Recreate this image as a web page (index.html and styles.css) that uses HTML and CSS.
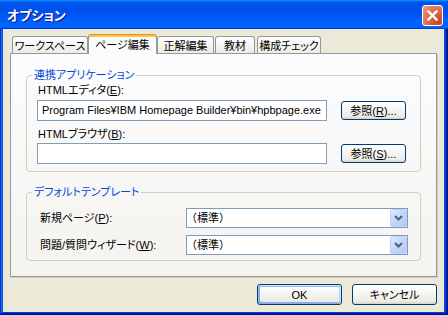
FILE: index.html
```html
<!DOCTYPE html>
<html lang="ja">
<head>
<meta charset="utf-8">
<title>オプション</title>
<link rel="stylesheet" href="styles.css">
</head>
<body>
<div class="window">
  <div class="titlebar">
    <span class="title">オプション</span>
    <button class="close" aria-label="閉じる">
      <svg width="11" height="11" viewBox="0 0 11 11"><path d="M1.5 1.5 L9.5 9.5 M9.5 1.5 L1.5 9.5" stroke="#fff" stroke-width="2.4" stroke-linecap="square" fill="none"/></svg>
    </button>
  </div>
  <div class="client">
    <div class="tabs">
      <div class="tab t1">ワークスペース</div>
      <div class="tab sel t2">ページ編集</div>
      <div class="tab t3">正解編集</div>
      <div class="tab t4">教材</div>
      <div class="tab t5">構成チェック</div>
    </div>
    <div class="panel">
      <fieldset class="group g1">
        <legend>連携アプリケーション</legend>
        <div class="gbody">
          <div class="lbl">HTMLエディタ(<u>E</u>):</div>
          <div class="frow r1">
            <div class="input">Program Files¥IBM Homepage Builder¥bin¥hpbpage.exe</div>
            <button class="btn browse">参照(<u>R</u>)...</button>
          </div>
          <div class="lbl l2">HTMLブラウザ(<u>B</u>):</div>
          <div class="frow r2">
            <div class="input"></div>
            <button class="btn browse">参照(<u>S</u>)...</button>
          </div>
        </div>
      </fieldset>
      <fieldset class="group g2">
        <legend>デフォルトテンプレート</legend>
        <div class="gbody">
          <div class="srow">
            <span class="slbl">新規ページ(<u>P</u>):</span>
            <div class="select"><span class="val">（標準）</span><span class="arrow"><svg width="9" height="6" viewBox="0 0 9 6"><path d="M1 1 L4.5 4.5 L8 1" stroke="#4D6185" stroke-width="2" fill="none"/></svg></span></div>
          </div>
          <div class="srow s2">
            <span class="slbl">問題/質問ウィザード(<u>W</u>):</span>
            <div class="select"><span class="val">（標準）</span><span class="arrow"><svg width="9" height="6" viewBox="0 0 9 6"><path d="M1 1 L4.5 4.5 L8 1" stroke="#4D6185" stroke-width="2" fill="none"/></svg></span></div>
          </div>
        </div>
      </fieldset>
    </div>
    <div class="actions">
      <button class="btn dlg default">OK</button>
      <button class="btn dlg">キャンセル</button>
    </div>
  </div>
</div>
</body>
</html>
```

FILE: styles.css
```css
html, body {
  margin: 0;
  padding: 0;
}
body {
  width: 448px;
  height: 315px;
  overflow: hidden;
  font-family: "Liberation Sans", "Noto Sans CJK JP", sans-serif;
  font-size: 11px;
  font-feature-settings: "palt";
  color: #000;
}
.window {
  width: 448px;
  height: 315px;
  box-sizing: border-box;
  display: flex;
  flex-direction: column;
  background: #0855dd;
  box-shadow: inset -1px -1px #00138c, inset 1px 0 #0831d9, inset -2px -2px #001ea0, inset 2px 0 #166aee, inset -3px -3px #003bda;
}
.titlebar {
  height: 29px;
  flex: none;
  display: flex;
  align-items: flex-start;
  padding: 0 5px 0 7px;
  background: linear-gradient(180deg, #0997ff, #0053ee 8%, #0050ee 40%, #0066ff 88%, #0066ff 93%, #005bff 95%, #003dd7 96%, #003dd7);
}
.title {
  color: #fff;
  font-family: "Noto Sans CJK JP", sans-serif;
  font-weight: bold;
  font-size: 13px;
  line-height: 16px;
  margin-top: 7px;
  text-shadow: 1px 1px #0f1089;
}
.close {
  margin: 5px 0 0 auto;
  width: 21px;
  height: 21px;
  padding: 0;
  box-sizing: border-box;
  border: 1px solid #fff;
  border-radius: 3px;
  background: radial-gradient(circle at 85% 85%, #cc4625 0%, #dc6448 45%, #f09c84 100%);
  display: flex;
  align-items: center;
  justify-content: center;
}
.close svg { display: block; }
.client {
  flex: 1;
  margin: 0 4px 3px 3px;
  background: #ece9d8;
  display: flex;
  flex-direction: column;
  padding: 5px 7px 0 7px;
}
.tabs {
  display: flex;
  align-items: flex-end;
  height: 19px;
  padding-left: 2px;
}
.tab {
  height: 17px;
  box-sizing: border-box;
  border: 1px solid #919b9c;
  border-bottom: none;
  border-radius: 3px 3px 0 0;
  background: linear-gradient(180deg, #fff, #f3f2ed 60%, #ecebe6);
  display: flex;
  align-items: center;
  justify-content: center;
  padding-top: 1px;
  line-height: 14px;
  white-space: nowrap;
}
.t1 { width: 76px; }
.t2 { width: 69px; }
.t3 { width: 57px; }
.t4 { width: 40px; margin-left: 1px; }
.t5 { width: 64px; margin-left: 2px; }
.tab.sel {
  height: 20px;
  margin-bottom: -1px;
  position: relative;
  z-index: 1;
  background: #fcfcfe;
  border-top: 1px solid #e68b2c;
  box-shadow: inset 0 2px #ffc73c;
  padding-top: 0;
}
.panel {
  height: 224px;
  box-sizing: border-box;
  border: 1px solid #919b9c;
  box-shadow: 1px 1px 0 #d0cdbd;
  background: linear-gradient(180deg, #fcfcfe, #f4f3ee);
  padding: 15px 15px 0 15px;
}
.group {
  margin: 0;
  padding: 0;
  min-width: 0;
  border: 1px solid #d0d0bf;
  border-radius: 4px;
}
.group legend {
  padding: 0 2px;
  margin-left: 5px;
  color: #0046d5;
  line-height: 13px;
  font-size: 11px;
}
.g2 { margin-top: 14px; }
.g1 .gbody { padding: 1px 0 7px 10px; }
.g2 .gbody { padding: 9px 0 5px 13px; }
.lbl {
  line-height: 14px;
  padding-left: 1px;
}
.lbl.l2 { margin-top: 6px; }
.frow {
  display: flex;
  align-items: center;
  height: 21px;
  margin-top: 3px;
}
.frow.r2 { margin-top: 2px; }
.input {
  width: 290px;
  height: 21px;
  box-sizing: border-box;
  border: 1px solid #7f9db9;
  background: #fff;
  padding-left: 4px;
  line-height: 19px;
  white-space: nowrap;
  overflow: hidden;
}
.btn {
  font: inherit;
  color: #000;
  box-sizing: border-box;
  border: 1px solid #003c74;
  border-radius: 3px;
  background: linear-gradient(180deg, #fff, #ecebe6 86%, #d6d0c5);
  padding: 0;
  line-height: 14px;
  white-space: nowrap;
}
.browse {
  width: 65px;
  height: 19px;
  margin-left: 14px;
}
.srow {
  display: flex;
  align-items: center;
  height: 20px;
}
.srow.s2 { margin-top: 7px; }
.slbl {
  width: 146px;
  flex: none;
  line-height: 14px;
  white-space: nowrap;
}
.select {
  width: 222px;
  height: 20px;
  box-sizing: border-box;
  border: 1px solid #7f9db9;
  background: #fff;
  display: flex;
  align-items: center;
  padding-left: 0;
}
.val {
  line-height: 14px;
  font-feature-settings: normal;
  margin-left: -1px;
}
.arrow {
  margin-left: auto;
  width: 17px;
  height: 18px;
  box-sizing: border-box;
  border: 1px solid #bfd2fa;
  border-radius: 2px;
  background: linear-gradient(135deg, #e2ebfe, #c3d5fb 50%, #b1c8f8);
  display: flex;
  align-items: center;
  justify-content: center;
}
.arrow svg { display: block; }
.actions {
  display: flex;
  justify-content: flex-end;
  gap: 10px;
  margin-top: 7px;
}
.dlg {
  width: 85px;
  height: 21px;
}
.dlg.default {
  box-shadow: inset -1px 1px #cee7ff, inset 1px 2px #98b8ea, inset -2px 2px #bcd4f6, inset 1px -1px #89ade4, inset 2px -2px #89ade4;
}
```
